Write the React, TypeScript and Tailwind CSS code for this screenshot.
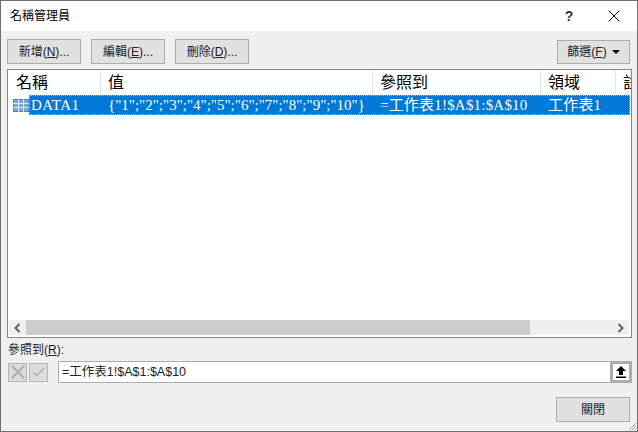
import { X, Check } from 'lucide-react'

const UI_FONT = "font-['Liberation_Sans','Noto_Sans_CJK_TC',sans-serif]"
const LIST_FONT = "font-['Liberation_Serif','Noto_Sans_CJK_TC',serif]"

const COLUMNS = [
  { label: '名稱', width: 'w-[93px] pl-[8px]' },
  { label: '值', width: 'w-[272px] pl-[7px]' },
  { label: '參照到', width: 'w-[168px] pl-[7px]' },
  { label: '領域', width: 'w-[75px] pl-[7px]' },
  { label: '註', width: 'flex-1 pl-[7px]' },
]

function DlgButton({ label, hotkey, suffix = '...', className = '' }: {
  label: string
  hotkey?: string
  suffix?: string
  className?: string
}) {
  return (
    <button className={`h-[25px] border-[1.5px] border-[#adadad] bg-[#e1e1e1] text-[12px] text-[#222] flex items-center justify-center ${className}`}>
      {label}
      {hotkey && (
        <>
          (<span className="underline">{hotkey}</span>){suffix}
        </>
      )}
    </button>
  )
}

export default function App() {
  return (
    <div className={`w-[638px] h-[432px] overflow-hidden bg-[#f0f0f0] border border-[#6e6e6e] flex flex-col ${UI_FONT}`}>
      {/* Title bar */}
      <div className="h-[30px] bg-white flex items-center justify-between shrink-0">
        <span className="pl-[9px] text-[12px] text-black">名稱管理員</span>
        <div className="flex items-center">
          <span className="w-[20px] text-center text-[14px] font-bold text-[#333]">?</span>
          <span className="w-[58px] flex justify-center pl-[12px]">
            <X size={20} strokeWidth={1.2} className="text-black" />
          </span>
        </div>
      </div>

      {/* Toolbar */}
      <div className="flex items-end justify-between pl-[6px] pr-[7px] pt-[8px] shrink-0">
        <div className="flex gap-[10px]">
          <DlgButton label="新增" hotkey="N" className="w-[74px]" />
          <DlgButton label="編輯" hotkey="E" className="w-[74px]" />
          <DlgButton label="刪除" hotkey="D" className="w-[74px]" />
        </div>
        <button className="w-[73px] h-[24px] border-[1.5px] border-[#adadad] bg-[#e1e1e1] text-[12px] text-[#222] flex items-center justify-center gap-[5px]">
          <span>篩選(<span className="underline">F</span>)</span>
          <span className="w-0 h-0 border-x-[4px] border-x-transparent border-t-[4px] border-t-black" />
        </button>
      </div>

      {/* Name list */}
      <div className="ml-[6px] mr-[5px] mt-[5px] h-[269px] border border-[#828790] bg-white flex flex-col shrink-0">
        <div className="h-[25px] flex shrink-0 overflow-hidden">
          {COLUMNS.map(c => (
            <div key={c.label} className={`${c.width} h-full border-r border-[#e5e5e5] last:border-r-0 flex items-center text-[16px] text-black whitespace-nowrap overflow-hidden`}>
              {c.label}
            </div>
          ))}
        </div>
        <div className="h-[20px] flex items-center shrink-0">
          <svg width="16" height="13" viewBox="0 0 16 13" className="ml-[5px] shrink-0">
            <rect x="0.5" y="0.5" width="15" height="12" fill="#7fa8d6" stroke="#4f81bd" />
            <path d="M0 4.5H16M0 8.5H16M5.5 0V13M10.5 0V13" stroke="#dce8f5" strokeWidth="1" />
          </svg>
          <div className={`flex-1 h-full bg-[#0078d7] mr-[1px] text-white flex items-center text-[15px] whitespace-nowrap border border-dotted border-[#f5b06a] ${LIST_FONT}`}>
            <span className="w-[78px] pl-[1px] tracking-[0.4px]">DATA1</span>
            <span className="w-[272px]">{'{"1";"2";"3";"4";"5";"6";"7";"8";"9";"10"}'}</span>
            <span className="w-[168px] tracking-[0.2px]">=工作表1!$A$1:$A$10</span>
            <span className="tracking-[0.2px]">工作表1</span>
          </div>
        </div>
        <div className="flex-1" />
        {/* Horizontal scrollbar */}
        <div className="h-[15px] ml-[1px] mr-[2px] mb-[2px] bg-[#f0f0f0] flex items-center shrink-0">
          <span className="w-[17px] flex justify-center">
            <svg width="7" height="10" viewBox="0 0 7 10"><path d="M5.5 1L1.5 5L5.5 9" fill="none" stroke="#606060" strokeWidth="2" /></svg>
          </span>
          <div className="w-[504px] h-full bg-[#cdcdcd]" />
          <div className="flex-1" />
          <span className="w-[17px] flex justify-center">
            <svg width="7" height="10" viewBox="0 0 7 10"><path d="M1.5 1L5.5 5L1.5 9" fill="none" stroke="#606060" strokeWidth="2" /></svg>
          </span>
        </div>
      </div>

      {/* Refers to */}
      <div className="pl-[7px] pt-[3px] h-[23px] text-[12px] leading-[18px] text-[#222] shrink-0">
        參照到(<span className="underline">R</span>):
      </div>
      <div className="flex items-center pl-[7px] pr-[5px] shrink-0">
        <span className="w-[19px] h-[19px] border border-[#b5b5b5] bg-[#dcdcdc] flex items-center justify-center">
          <X size={22} strokeWidth={2.5} className="text-[#b0b0b0] shrink-0" />
        </span>
        <span className="w-[19px] h-[19px] ml-[2px] border border-[#b5b5b5] bg-[#dcdcdc] flex items-center justify-center">
          <Check size={15} strokeWidth={3} className="text-[#b8b8b8]" />
        </span>
        <div className="ml-[10px] flex-1 h-[22px] border border-r-0 border-[#adadad] bg-white flex items-center pl-[3px] text-[12.5px] text-[#222]">
          =工作表1!$A$1:$A$10
        </div>
        <span className="w-[22px] h-[22px] border-[3px] border-[#adadad] bg-white flex items-center justify-center">
          <svg width="12" height="14" viewBox="0 0 12 14">
            <path d="M6 1L11 6H8V10H4V6H1Z" fill="#000" />
            <rect x="1" y="11.5" width="10" height="1.5" fill="#000" />
          </svg>
        </span>
      </div>

      {/* Footer */}
      <div className="flex justify-end pr-[7px] pt-[14px] relative flex-1">
        <DlgButton label="關閉" className="w-[74px]" />
        <svg width="10" height="10" viewBox="0 0 10 10" className="absolute right-0 bottom-0">
          <path d="M9 2L2 9M9 5L5 9M9 8L8 9" stroke="#a0a0a0" strokeWidth="1" />
        </svg>
      </div>
    </div>
  )
}
